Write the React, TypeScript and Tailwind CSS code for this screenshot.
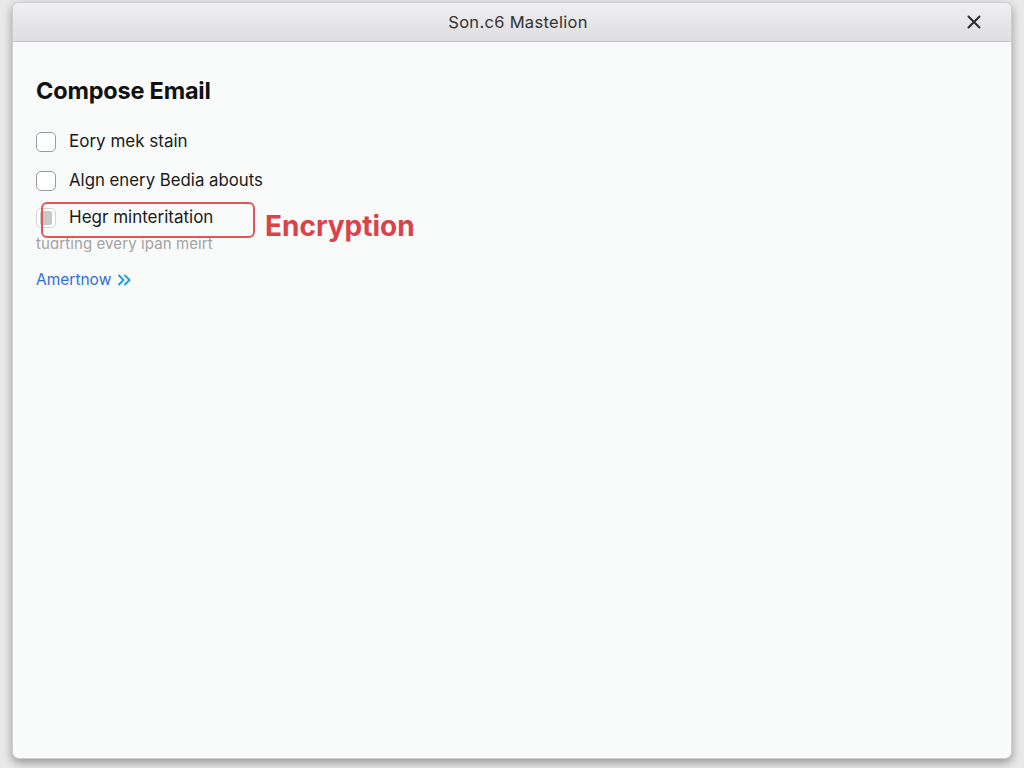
import React from "react";

const font = { fontFamily: "Inter, 'Noto Sans', 'Liberation Sans', sans-serif" };

function Box({ dim }: { dim?: boolean }) {
  return (
    <div
      className={
        "w-[20px] h-[20px] shrink-0 rounded-[5px] border-[1.5px] bg-white flex items-center justify-center " +
        (dim ? "border-[#d4d4d4]" : "border-[#9a9a9a]")
      }
    >
      {dim && <div className="w-[12px] h-[14px] rounded-[2px] bg-[#c9c9c9]" />}
    </div>
  );
}

export default function App() {
  return (
    <div className="w-[1024px] h-[768px] bg-[#e9e9e9] pt-[2px] px-[12px] pb-[9px]" style={font}>
      <div className="h-full flex flex-col rounded-[7px] bg-[#f9fafa] border border-[#cfcfd1] shadow-[0_4px_10px_rgba(0,0,0,0.35)] overflow-hidden">
        <div className="h-[39px] shrink-0 relative flex items-center justify-center bg-gradient-to-b from-[#f0f0f2] to-[#dedee0] border-b border-[#c6c6c8]">
          <span className="text-[16.5px] text-[#333333] tracking-[0.3px] ml-[12px]">Son.c6 Mastelion</span>
          <svg
            className="absolute right-[30px] top-[12px]"
            width="14"
            height="14"
            viewBox="0 0 14 14"
            fill="none"
            stroke="#2b2b2b"
            strokeWidth="2"
            strokeLinecap="round"
          >
            <path d="M1.5 1.5 L12.5 12.5 M12.5 1.5 L1.5 12.5" />
          </svg>
        </div>
        <div className="flex-1 flex flex-col items-start pl-[23px] pt-[35px]">
          <h1 className="text-[23.5px] leading-[28px] font-bold text-[#111111] tracking-[-0.2px]">Compose Email</h1>
          <div className="mt-[27px] h-[20px] flex items-center gap-[13px]">
            <Box />
            <span className="text-[17px] text-[#1a1a1a]">Eory mek stain</span>
          </div>
          <div className="mt-[19px] h-[20px] flex items-center gap-[13px]">
            <Box />
            <span className="text-[16.8px] text-[#1a1a1a]">Algn enery Bedia abouts</span>
          </div>
          <div className="mt-[17px] h-[20px] flex items-center gap-[13px] relative">
            <Box dim />
            <span className="text-[17px] text-[#1a1a1a]">Hegr minteritation</span>
            <div className="absolute left-[5px] top-[-6px] w-[214px] h-[36px] rounded-[6px] border-[2.5px] border-[#e2555b]" />
            <span className="absolute left-[229px] top-[2px] text-[28px] leading-[32px] font-bold text-[#d9434a] whitespace-nowrap">
              Encryption
            </span>
          </div>
          <div className="mt-[7px] text-[15px] leading-[18px] tracking-[0.1px] text-[#a3a3a3]">tuɑrting every ipan meirt</div>
          <div className="mt-[17px] h-[20px] flex items-center gap-[6px]">
            <span className="text-[15.5px] text-[#2f6fd3]">Amertnow</span>
            <svg width="15" height="14" viewBox="0 0 15 14" fill="none" stroke="#1f9fe0" strokeWidth="2" strokeLinecap="round" strokeLinejoin="round">
              <path d="M2 2.5 L6.5 7 L2 11.5 M8 2.5 L12.5 7 L8 11.5" />
            </svg>
          </div>
        </div>
      </div>
    </div>
  );
}
